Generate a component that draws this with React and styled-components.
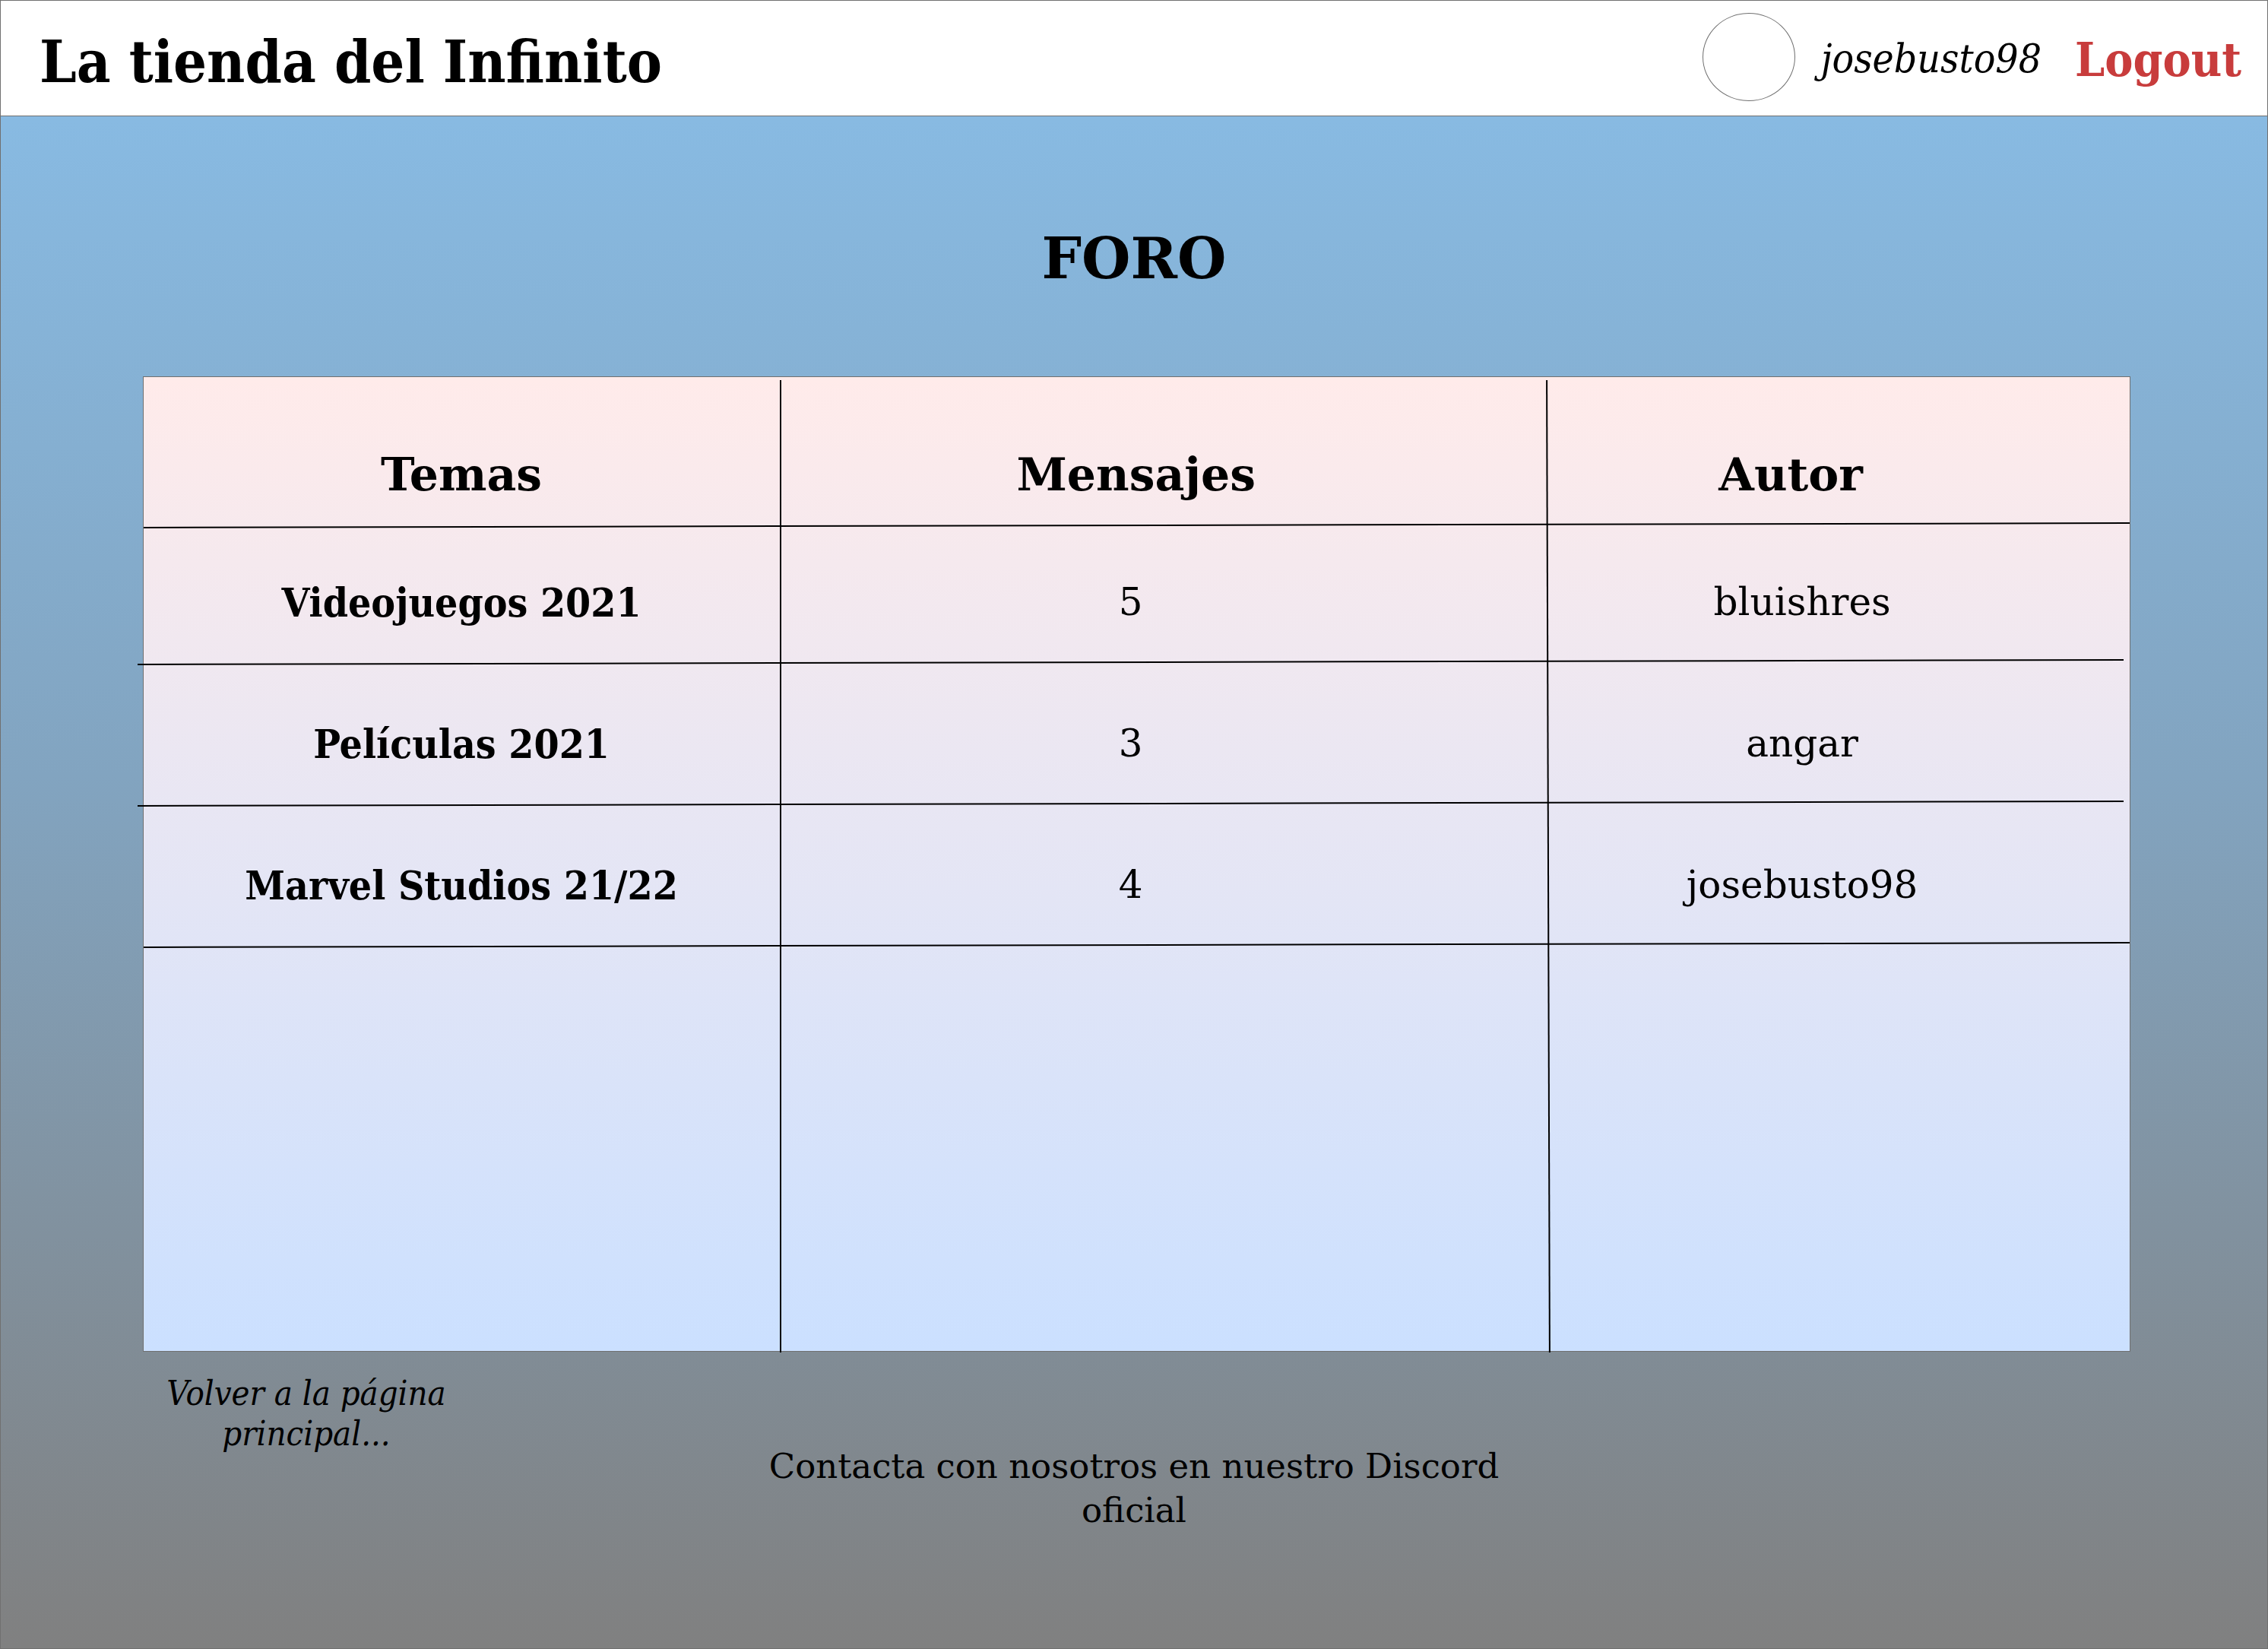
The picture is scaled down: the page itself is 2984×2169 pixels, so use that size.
import React from "react";
import styled, { createGlobalStyle } from "styled-components";

const regular = `"DejaVu Serif", serif`;
const condensed = `"DejaVu Serif Condensed", "DejaVu Serif", serif`;

const GlobalStyle = createGlobalStyle`
  *, *::before, *::after { box-sizing: border-box; }
  body {
    margin: 0;
    font-family: ${regular};
    color: #000;
  }
`;

const Page = styled.div`
  display: flex;
  flex-direction: column;
  min-height: 100vh;
  border: 1px solid #707070;
  background: linear-gradient(#89bee8, #82a4c0 47%, #808080);
`;

const Header = styled.header`
  display: flex;
  align-items: center;
  justify-content: space-between;
  height: 152px;
  padding: 0 34px 0 51px;
  background: #fff;
  border-bottom: 1px solid #707070;
`;

const Brand = styled.h1`
  margin: 0;
  padding-top: 8px;
  font-family: ${condensed};
  font-size: 77px;
  line-height: 90px;
`;

const Account = styled.div`
  display: flex;
  align-items: center;
`;

const Avatar = styled.div`
  width: 122px;
  height: 116px;
  margin: 0 34px 4px 0;
  border: 1px solid #707070;
  border-radius: 50%;
  background: #fff;
`;

const UserName = styled.span`
  margin-right: 44px;
  font-family: ${condensed};
  font-size: 53px;
  font-style: italic;
  line-height: 60px;
`;

const LogoutButton = styled.button`
  padding: 4px 0 0;
  border: 0;
  background: none;
  color: #c83c3c;
  font-family: ${condensed};
  font-size: 62px;
  font-weight: bold;
  line-height: 80px;
  cursor: pointer;
`;

const Main = styled.main`
  padding-top: 142px;
`;

const Heading = styled.h2`
  margin: 0 0 110px;
  font-size: 74px;
  line-height: 90px;
  text-align: center;
`;

const Sheet = styled.div`
  position: relative;
  min-height: 1283px;
  margin: 0 180px 0 187px;
  border: 1px solid #707070;
  background: linear-gradient(#ffebea, #cbe0ff);

  &::before,
  &::after {
    content: "";
    position: absolute;
    top: 4px;
    bottom: -2px;
    width: 2px;
    background: #000;
  }
  &::before {
    left: 32.05%;
  }
  &::after {
    left: 70.7%;
    transform: skewX(0.17deg);
  }
`;

const Table = styled.table`
  width: 100%;
  table-layout: fixed;
  border-collapse: collapse;
`;

const Row = styled.tr`
  position: relative;
  height: ${(p) => p.$height}px;

  &::after {
    content: "";
    position: absolute;
    left: ${(p) => (p.$overhang ? "-8px" : "0")};
    bottom: 0;
    width: 100%;
    height: 2px;
    background: #000;
    transform: skewY(-0.13deg);
  }
`;

const ColumnHead = styled.th`
  width: ${(p) => p.$width};
  padding: 0 ${(p) => p.$inset}px 28px 0;
  font-size: 60px;
  line-height: 80px;
  vertical-align: bottom;
`;

const Cell = styled.td`
  padding: 0 ${(p) => p.$inset}px 50px 0;
  font-size: 50px;
  line-height: 60px;
  text-align: center;
  vertical-align: bottom;
`;

const TopicCell = styled(Cell)`
  font-family: ${condensed};
  font-size: 53px;
  font-weight: bold;
`;

const Footer = styled.footer`
  display: grid;
  grid-template-columns: 1fr 1000px 1fr;
  padding: 28px 180px 60px;
`;

const FooterLink = styled.a`
  color: inherit;
  text-align: center;
  text-decoration: none;
`;

const BackLink = styled(FooterLink)`
  width: 400px;
  margin-left: 22px;
  font-family: ${condensed};
  font-size: 45px;
  font-style: italic;
  line-height: 53px;
`;

const DiscordLink = styled(FooterLink)`
  margin-top: 94px;
  font-size: 45px;
  line-height: 58px;
`;

const topics = [
  { title: "Videojuegos 2021", messages: 5, author: "bluishres", height: 180, overhang: true },
  { title: "Películas 2021", messages: 3, author: "angar", height: 186, overhang: true },
  { title: "Marvel Studios 21/22", messages: 4, author: "josebusto98", height: 186, overhang: false },
];

export default function App() {
  return (
    <>
      <GlobalStyle />
      <Page>
        <Header>
          <Brand>La tienda del Infinito</Brand>
          <Account>
            <Avatar />
            <UserName>josebusto98</UserName>
            <LogoutButton type="button">Logout</LogoutButton>
          </Account>
        </Header>
        <Main>
          <Heading>FORO</Heading>
          <Sheet>
            <Table>
              <thead>
                <Row $height={196}>
                  <ColumnHead $width="32%" $inset={0}>Temas</ColumnHead>
                  <ColumnHead $width="39%" $inset={80}>Mensajes</ColumnHead>
                  <ColumnHead $width="29%" $inset={134}>Autor</ColumnHead>
                </Row>
              </thead>
              <tbody>
                {topics.map((t) => (
                  <Row key={t.title} $height={t.height} $overhang={t.overhang}>
                    <TopicCell $inset={0}>{t.title}</TopicCell>
                    <Cell $inset={94}>{t.messages}</Cell>
                    <Cell $inset={104}>{t.author}</Cell>
                  </Row>
                ))}
              </tbody>
            </Table>
          </Sheet>
        </Main>
        <Footer>
          <BackLink href="#inicio">Volver a la página principal...</BackLink>
          <DiscordLink href="#discord">Contacta con nosotros en nuestro Discord oficial</DiscordLink>
        </Footer>
      </Page>
    </>
  );
}
